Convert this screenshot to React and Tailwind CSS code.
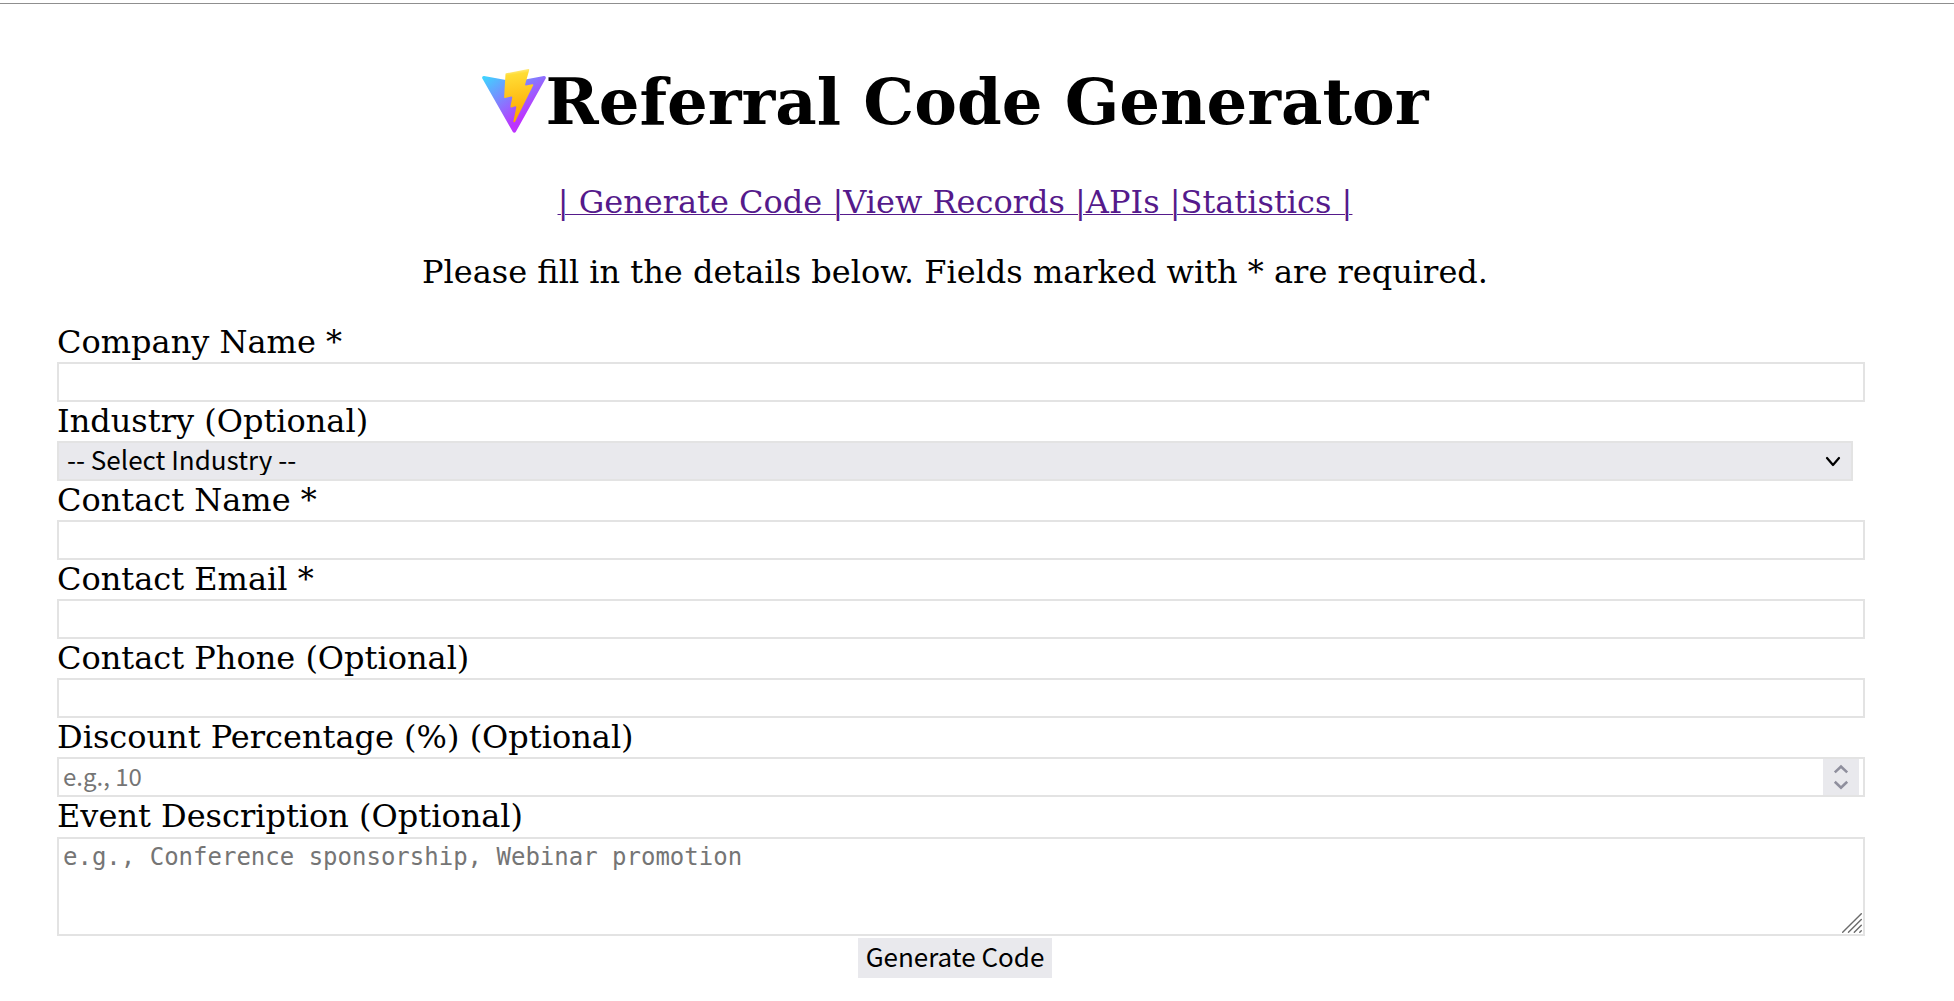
import React from "react";

const FIELD =
  "block h-10 w-full border-2 border-[#e3e3e3] bg-white px-1 pb-1 text-[24px] leading-8 outline-none placeholder:text-[#757575] placeholder:opacity-100 font-['Noto_Sans_CJK_SC',sans-serif]";

function Logo() {
  return (
    <svg className="size-16 shrink-0" viewBox="0 0 256 257" preserveAspectRatio="xMidYMid" aria-hidden="true">
      <defs>
        <linearGradient id="logoBody" x1="-.828%" x2="57.636%" y1="7.652%" y2="78.411%">
          <stop offset="0%" stopColor="#41D1FF" />
          <stop offset="100%" stopColor="#BD34FE" />
        </linearGradient>
        <linearGradient id="logoBolt" x1="43.376%" x2="50.316%" y1="2.242%" y2="89.03%">
          <stop offset="0%" stopColor="#FFEA83" />
          <stop offset="8.333%" stopColor="#FFDD35" />
          <stop offset="100%" stopColor="#FFA800" />
        </linearGradient>
      </defs>
      <path
        fill="url(#logoBody)"
        d="M255.153 37.938L134.897 252.976c-2.483 4.44-8.862 4.466-11.382.048L.875 37.958c-2.746-4.814 1.371-10.646 6.827-9.67l120.385 21.517a6.537 6.537 0 0 0 2.322-.004l117.867-21.483c5.438-.991 9.574 4.796 6.877 9.62Z"
      />
      <path
        fill="url(#logoBolt)"
        d="M185.432.063L96.44 17.501a3.268 3.268 0 0 0-2.634 3.014l-5.474 92.456a3.268 3.268 0 0 0 3.997 3.378l24.777-5.718c2.318-.535 4.413 1.507 3.936 3.838l-7.361 36.047c-.495 2.426 1.782 4.5 4.151 3.78l15.304-4.649c2.372-.72 4.652 1.36 4.15 3.788l-11.698 56.621c-.732 3.542 3.979 5.473 5.943 2.437l1.313-2.028l72.516-144.72c1.215-2.423-.88-5.186-3.54-4.672l-25.505 4.922c-2.396.462-4.435-1.77-3.759-4.114l16.646-57.705c.677-2.35-1.37-4.583-3.769-4.113Z"
      />
    </svg>
  );
}

function Field({ id, label, children }) {
  return (
    <div>
      <label htmlFor={id} className="block h-[39px] leading-[38px]">
        {label}
      </label>
      {children}
    </div>
  );
}

export default function App() {
  return (
    <div className="pt-[3px] text-[32px] text-black font-['DejaVu_Serif',serif]">
      <div className="h-px bg-[#8f8f8f]" />
      <main className="ml-[57px] mr-[101px] pt-[59px]">
        <h1 className="flex items-center justify-center text-[64px] leading-[74px] font-bold">
          <Logo />
          <span className="pt-0.5">Referral Code Generator</span>
        </h1>
        <nav className="mt-[44px] text-center leading-[38px] text-[#551a8b] underline decoration-1">
          <a href="#generate">| Generate Code |</a>
          <a href="#records">View Records |</a>
          <a href="#apis">APIs |</a>
          <a href="#statistics">Statistics |</a>
        </nav>
        <p className="my-8 text-center leading-[38px]">
          Please fill in the details below. Fields marked with * are required.
        </p>
        <form onSubmit={(e) => e.preventDefault()}>
          <div className="-mr-3">
            <Field id="company" label="Company Name *">
              <input id="company" type="text" required className={FIELD} />
            </Field>
            <Field id="industry" label="Industry (Optional)">
              <div className="relative mr-3">
                <select
                  id="industry"
                  className="block h-10 w-full appearance-none border-2 border-[#e3e3e3] bg-[#e9e9ed] px-2 pb-1 text-[26px] leading-8 outline-none font-['Noto_Sans_CJK_SC',sans-serif]"
                >
                  <option>-- Select Industry --</option>
                </select>
                <svg
                  className="pointer-events-none absolute top-3 right-3 size-4"
                  viewBox="0 0 16 16"
                  fill="none"
                  stroke="#000"
                  strokeWidth="2.2"
                  strokeLinecap="round"
                  strokeLinejoin="round"
                  aria-hidden="true"
                >
                  <path d="M2 5l6 7l6-7" />
                </svg>
              </div>
            </Field>
            <Field id="contact" label="Contact Name *">
              <input id="contact" type="text" required className={FIELD} />
            </Field>
            <Field id="email" label="Contact Email *">
              <input id="email" type="email" required className={FIELD} />
            </Field>
            <Field id="phone" label="Contact Phone (Optional)">
              <input id="phone" type="tel" className={FIELD} />
            </Field>
            <Field id="discount" label="Discount Percentage (%) (Optional)">
              <div className="relative">
                <input
                  id="discount"
                  type="number"
                  placeholder="e.g., 10"
                  className={FIELD + " [appearance:textfield]"}
                />
                <svg
                  className="pointer-events-none absolute top-0.5 right-1.5 size-9 bg-[#e9e9ed]"
                  viewBox="0 0 36 36"
                  fill="none"
                  stroke="#8f8f9d"
                  strokeWidth="2.6"
                  aria-hidden="true"
                >
                  <path d="M11.8 13.4L18 7.6l6.2 5.8M11.8 22.8L18 28.6l6.2-5.8" />
                </svg>
              </div>
            </Field>
            <Field id="event" label="Event Description (Optional)">
              <div className="relative pt-px">
                <textarea
                  id="event"
                  placeholder="e.g., Conference sponsorship, Webinar promotion"
                  className="block h-[99px] w-full resize-none border-2 border-[#e3e3e3] bg-white px-1 py-1 text-[24px] leading-7 outline-none placeholder:text-[#757575] placeholder:opacity-100 font-['DejaVu_Sans_Mono',monospace]"
                />
                <svg
                  className="pointer-events-none absolute right-[3px] bottom-[3px] size-5"
                  viewBox="0 0 20 20"
                  fill="none"
                  stroke="#6b6b6b"
                  strokeWidth="1.4"
                  strokeLinecap="round"
                  aria-hidden="true"
                >
                  <path d="M.7 19.3L19.3.7M6.5 19.3L19.3 6.5M12.3 19.3L19.3 12.3M17.8 19.3L19.3 17.8" />
                </svg>
              </div>
            </Field>
          </div>
          <div className="flex justify-center pt-0.5">
            <button
              type="submit"
              className="h-10 bg-[#e9e9ed] px-2 pb-1 text-[26px] leading-8 font-['Noto_Sans_CJK_SC',sans-serif]"
            >
              Generate Code
            </button>
          </div>
        </form>
      </main>
    </div>
  );
}
